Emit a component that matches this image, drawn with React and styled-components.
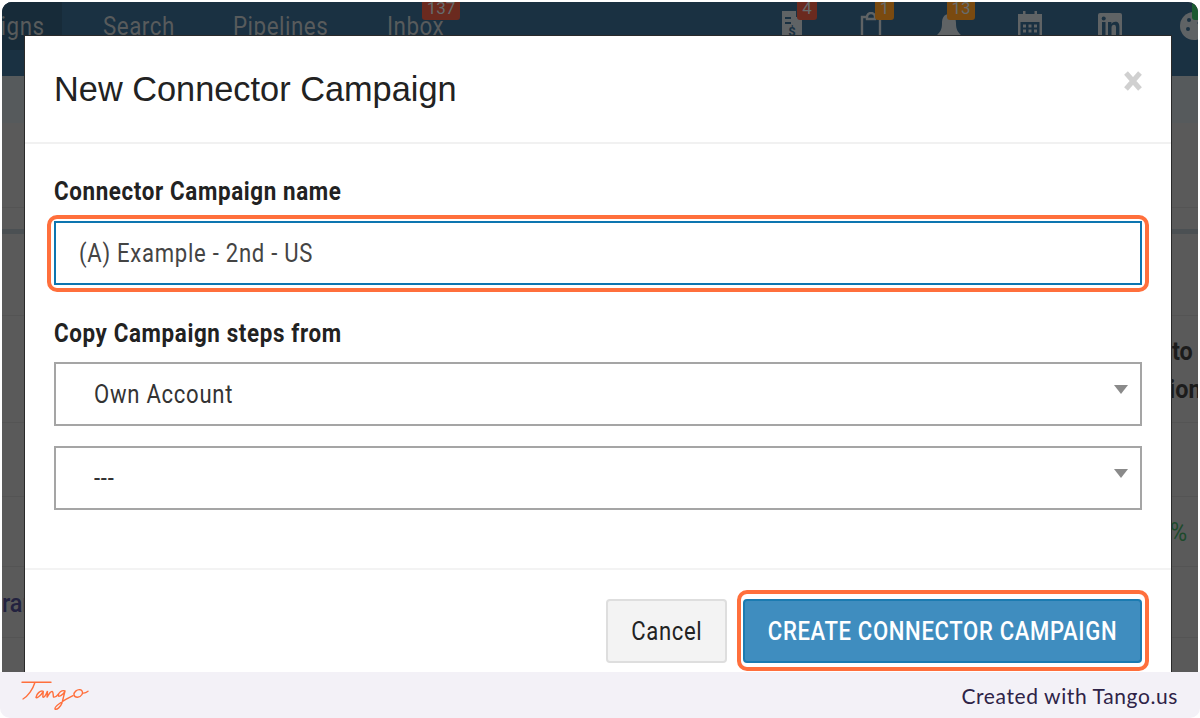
import React from "react";
import styled, { createGlobalStyle } from "styled-components";

const Global = createGlobalStyle`
  html, body { margin: 0; padding: 0; background: #fff; }
  body { font-family: Roboto, "Liberation Sans", sans-serif; }
  * { box-sizing: border-box; }
`;

const Frame = styled.div`
  width: 1200px; height: 718px; display: flex; flex-direction: column; overflow: hidden;
`;
const Screen = styled.div`
  position: relative; height: 670px; margin: 2px 2px 0; overflow: hidden;
  border-radius: 10px 10px 0 0; background: #5a5a5a; display: flex; flex-direction: column;
`;
const Nav = styled.div`
  height: 74px; flex: none; background: #1a3142; display: flex; color: #585b5c; font-size: 26px;
`;
const NavLink = styled.div`
  position: relative; height: 48px; line-height: 48px; width: ${p => p.$w}px; flex: none; white-space: nowrap;
  margin-right: ${p => p.$mr || 0}px; background: ${p => p.$active ? "#172b39" : "transparent"};
`;
const NavText = styled.span`
  display: inline-block; transform: scaleX(.86); transform-origin: left; letter-spacing: .6px; margin-left: ${p => p.$shift || 0}px;
`;
const Spacer = styled.div`flex: 1;`;
const IconSlot = styled.div`
  position: relative; width: ${p => p.$w}px; flex: none; padding-top: ${p => p.$top}px;
`;
const Badge = styled.span`
  position: absolute; top: -8px; left: ${p => p.$left}px; width: ${p => p.$w}px; height: 26px; border-radius: 3px;
  background: ${p => p.$bg}; color: #666c6e; font-size: 17px; line-height: 24px; padding-top: 2px; text-align: center;
`;
const Band = styled.div`
  height: ${p => p.$h}px; flex: none; background: ${p => p.$bg || "#5a5a5a"};
  border-bottom: ${p => p.$line ? "1px solid #545454" : "0"};
  display: flex; justify-content: space-between; align-items: center; font-weight: 700; color: #1c1c1c; font-size: 26px;
`;
const SideText = styled.div`
  width: 26px; flex: none; white-space: nowrap; overflow: hidden; color: ${p => p.$c || "#1c1c1c"};
  font-weight: ${p => p.$w || 700}; padding-top: ${p => p.$top || 0}px;
`;
const SideLine = styled.div`
  line-height: 38px; transform: scaleX(.9); transform-origin: left; margin-left: ${p => p.$shift || 0}px;
`;
const Modal = styled.div`
  position: absolute; left: 23px; top: 34px; width: 1146px; height: 700px; background: #fff;
  box-shadow: 0 0 0 1px #2a2a2a; display: flex; flex-direction: column;
`;
const Header = styled.div`
  height: 108px; flex: none; border-bottom: 2px solid #f1f1f1; padding: 0 29px; display: flex; align-items: center; justify-content: space-between;
`;
const Title = styled.h2`
  margin: 0; font: 400 34.35px "Liberation Sans", Arial, sans-serif; color: #222;
`;
const Close = styled.svg`
  width: 18px; height: 20px; display: block; margin-top: -16px;
`;
const Body = styled.div`
  height: 426px; flex: none; padding: 32px 29px 0; border-bottom: 2px solid #f3f3f3;
`;
const Label = styled.div`
  font-weight: 700; font-size: 26px; line-height: 30px; letter-spacing: .74px; color: #222;
  margin-top: ${p => p.$mt || 0}px; margin-bottom: ${p => p.$mb}px;
  transform: scaleX(.86); transform-origin: left; white-space: nowrap;
`;
const Ring = styled.div`
  position: relative;
  &::after {
    content: ""; position: absolute; top: ${p => p.$t}px; bottom: ${p => p.$b}px; left: ${p => p.$l}px; right: -7px;
    border: 4px solid #ff6f3c; border-radius: 10px; pointer-events: none;
  }
`;
const TextInput = styled.div`
  height: 64px; border: 2px solid #0d75b0; padding-left: 23px; display: flex; align-items: center;
  font-size: 26px; color: #444;
`;
const Narrow = styled.span`
  display: inline-block; transform: scaleX(.85); transform-origin: left; letter-spacing: .85px; white-space: nowrap;
`;
const SelectBox = styled.div`
  position: relative; height: 64px; border: 2px solid #a5a5a5; padding-left: 38px; display: flex; align-items: center;
  font-size: 26px; color: #333; margin-bottom: 20px;
`;
const Caret = styled.span`
  position: absolute; right: 12px; top: 21px; width: 0; height: 0;
  border-left: 7.5px solid transparent; border-right: 7.5px solid transparent; border-top: 9px solid #8a8a8a;
`;
const Foot = styled.div`
  display: flex; justify-content: flex-end; gap: 16px; padding: 29px 29px 0;
`;
const Button = styled.div`
  height: 64px; border-radius: 4px; display: flex; align-items: center; justify-content: center;
  font-size: 26px; width: ${p => p.$w}px;
  background: ${p => p.$primary ? "#3f8dbf" : "#f3f3f3"}; color: ${p => p.$primary ? "#fff" : "#222"};
  border: 2px solid ${p => p.$primary ? "#1b7bb1" : "#dedede"};
  font-weight: ${p => p.$primary ? 500 : 400};
`;
const CentredNarrow = styled.span`
  display: inline-block; transform: scaleX(.85); letter-spacing: .75px; white-space: nowrap;
`;
const Footer = styled.div`
  height: 46px; flex: none; background: #f3f1f7; border-radius: 0 0 10px 10px; display: flex; align-items: center; justify-content: space-between;
  padding: 0 22px 0 20px;
`;
const Credit = styled.div`
  font: 400 21px Lato, sans-serif; color: #2e2347; letter-spacing: .6px;
`;
const Logo = styled.svg`width: 70px; height: 32px; display: block; margin-top: 4px;`;

const Doc = () => (
  <svg width="20" height="32" viewBox="0 0 20 32" fill="#5f6365">
    <path d="M0 0h14l6 6v26H0z" />
    <g fill="#1a3142">
      <rect x="3" y="6" width="6" height="2" /><rect x="3" y="11" width="6" height="2" />
      <path d="M14 0v6h6V0z" />
    </g>
    <text x="10" y="25" textAnchor="middle" fontSize="13" fontWeight="700" fill="#1a3142">$</text>
  </svg>
);
const Clip = () => (
  <svg width="22" height="30" viewBox="0 0 22 30" fill="none" stroke="#5f6365" strokeWidth="2.4">
    <path d="M7 5H2v25M15 5h5v25" />
    <path d="M7 7V5a4 4 0 0 1 8 0v2z" fill="#1a3142" />
  </svg>
);
const Bell = () => (
  <svg width="24" height="30" viewBox="0 0 24 30" fill="#5f6365">
    <path d="M12 0c5 0 7 4 7 9 0 7 2 9 5 12H0c3-3 5-5 5-12 0-5 2-9 7-9z" />
  </svg>
);
const Cal = () => (
  <svg width="24" height="30" viewBox="0 0 24 30" fill="#5f6365">
    <path d="M5 0h2.500v3h9V0H19v3h5v27H0V3h5z" />
    <path fill="#1a3142" d="M2.500 11h19v17h-19z" />
    <g>
      {[5, 10.5, 16].map(x => [13.5, 18.5].map(y => <rect key={x + "-" + y} x={x} y={y} width="3" height="3" />))}
    </g>
  </svg>
);
const LinkedIn = () => (
  <svg width="24" height="30" viewBox="0 0 24 30">
    <rect width="24" height="30" rx="2" fill="#5f6365" />
    <g fill="#1a3142">
      <rect x="4" y="9" width="3.500" height="13" />
      <circle cx="5.700" cy="5.500" r="2" />
      <path d="M10 9h3.400v2c1-1.500 2.300-2.200 4-2.200 3 0 4 2 4 5V22H18v-7.200c0-1.800-.5-3-2-3s-2.500 1.200-2.500 3V22H10z" />
    </g>
  </svg>
);
const Cookie = () => (
  <svg width="30" height="30" viewBox="0 0 30 30" fill="#5f6365">
    <circle cx="15" cy="14" r="14" />
    <g fill="#1a3142">
      <circle cx="10" cy="8" r="2" /><circle cx="9" cy="17" r="2" /><circle cx="20" cy="11" r="1.500" />
    </g>
  </svg>
);

export default function App() {
  return (
    <Frame>
      <Global />
      <Screen>
        <Nav>
          <NavLink $w={60} $mr={41} $active><NavText $shift={-75}>Campaigns</NavText></NavLink>
          <NavLink $w={130}><NavText>Search</NavText></NavLink>
          <NavLink $w={154}><NavText>Pipelines</NavText></NavLink>
          <NavLink $w={100}><NavText>Inbox</NavText><Badge $left={35} $w={38} $bg="#6b2a1f">137</Badge></NavLink>
          <Spacer />
          <IconSlot $w={78} $top={9}><Doc /><Badge $left={15} $w={20} $bg="#6b2a1f">4</Badge></IconSlot>
          <IconSlot $w={77} $top={10}><Clip /><Badge $left={15} $w={19} $bg="#7a4a10">1</Badge></IconSlot>
          <IconSlot $w={81} $top={12}><Bell /><Badge $left={10} $w={28} $bg="#7a4a10">13</Badge></IconSlot>
          <IconSlot $w={80} $top={9}><Cal /></IconSlot>
          <IconSlot $w={81} $top={11}><LinkedIn /></IconSlot>
          <IconSlot $w={19} $top={10}><Cookie /><Badge $left={13} $w={10} $bg="#1a5a30" /></IconSlot>
        </Nav>
        <Band $h={47} $bg="#565a5c" />
        <Band $h={85} $line />
        <Band $h={21} />
        <Band $h={5} $bg="#4b5053" />
        <Band $h={82} $line />
        <Band $h={107} $line>
          <span />
          <SideText $top={2}>
            <SideLine>to</SideLine>
            <SideLine $shift={-3}>ion</SideLine>
          </SideText>
        </Band>
        <Band $h={74} $line />
        <Band $h={70} $line>
          <span />
          <SideText $c="#1d4a2c" $w={400}><SideLine $shift={-2}>%</SideLine></SideText>
        </Band>
        <Band $h={71} $line>
          <SideText $c="#23223f" $w={500} $top={2}><SideLine>ran</SideLine></SideText>
          <span />
        </Band>
        <Band $h={34} />
        <Modal>
          <Header>
            <Title>New Connector Campaign</Title>
            <Close viewBox="0 0 18 20" aria-hidden="true"><path d="M2 2l14 16M16 2L2 18" stroke="#d0d0d0" strokeWidth="5" /></Close>
          </Header>
          <Body>
            <Label $mb={15}>Connector Campaign name</Label>
            <Ring $t={-6} $b={-7} $l={-7}><TextInput><Narrow>(A) Example - 2nd - US</Narrow></TextInput></Ring>
            <Label $mt={33} $mb={14}>Copy Campaign steps from</Label>
            <SelectBox><Narrow>Own Account</Narrow><Caret /></SelectBox>
            <SelectBox><Narrow>---</Narrow><Caret /></SelectBox>
          </Body>
          <Foot>
            <Button $w={121}><CentredNarrow>Cancel</CentredNarrow></Button>
            <Ring $t={-9} $b={-8} $l={-6}><Button $primary $w={399}><CentredNarrow>CREATE CONNECTOR CAMPAIGN</CentredNarrow></Button></Ring>
          </Foot>
        </Modal>
      </Screen>
      <Footer>
        <Logo viewBox="0 0 70 32" fill="none" stroke="#ff6f3c" strokeWidth="1.400" strokeLinecap="round" aria-label="Tango">
          <path d="M2 1.300h29M15 1.300C13 8 8 15 3 18" />
          <path d="M23.300 10.300c-3-1.500-7 3-7.300 6 .2 1.500 4.500-1 7.300-6l-.5 5.500c1 1.500 3-1.500 4.700-5.800l-.5 6.500c1-2 3-6 5-6 1.500 0 1 4 1.500 5.500 2 1 4-2 5-3" />
          <path d="M45 10c-3-1.500-7 2-6.700 4.700.6 1.500 5-.7 6.700-4.700l-3 12c-1.500 4-5 7-7 6-1-2.500 9-9 18-13.300" />
          <path d="M60 8.700c-3-.5-6.500 2.500-6 5.300.8 3 6 3 8-.5 1.500-2.500-.5-5-2-4.800M62.500 12c2 .5 4-.5 5.500-1.700" />
        </Logo>
        <Credit>Created with Tango.us</Credit>
      </Footer>
    </Frame>
  );
}
